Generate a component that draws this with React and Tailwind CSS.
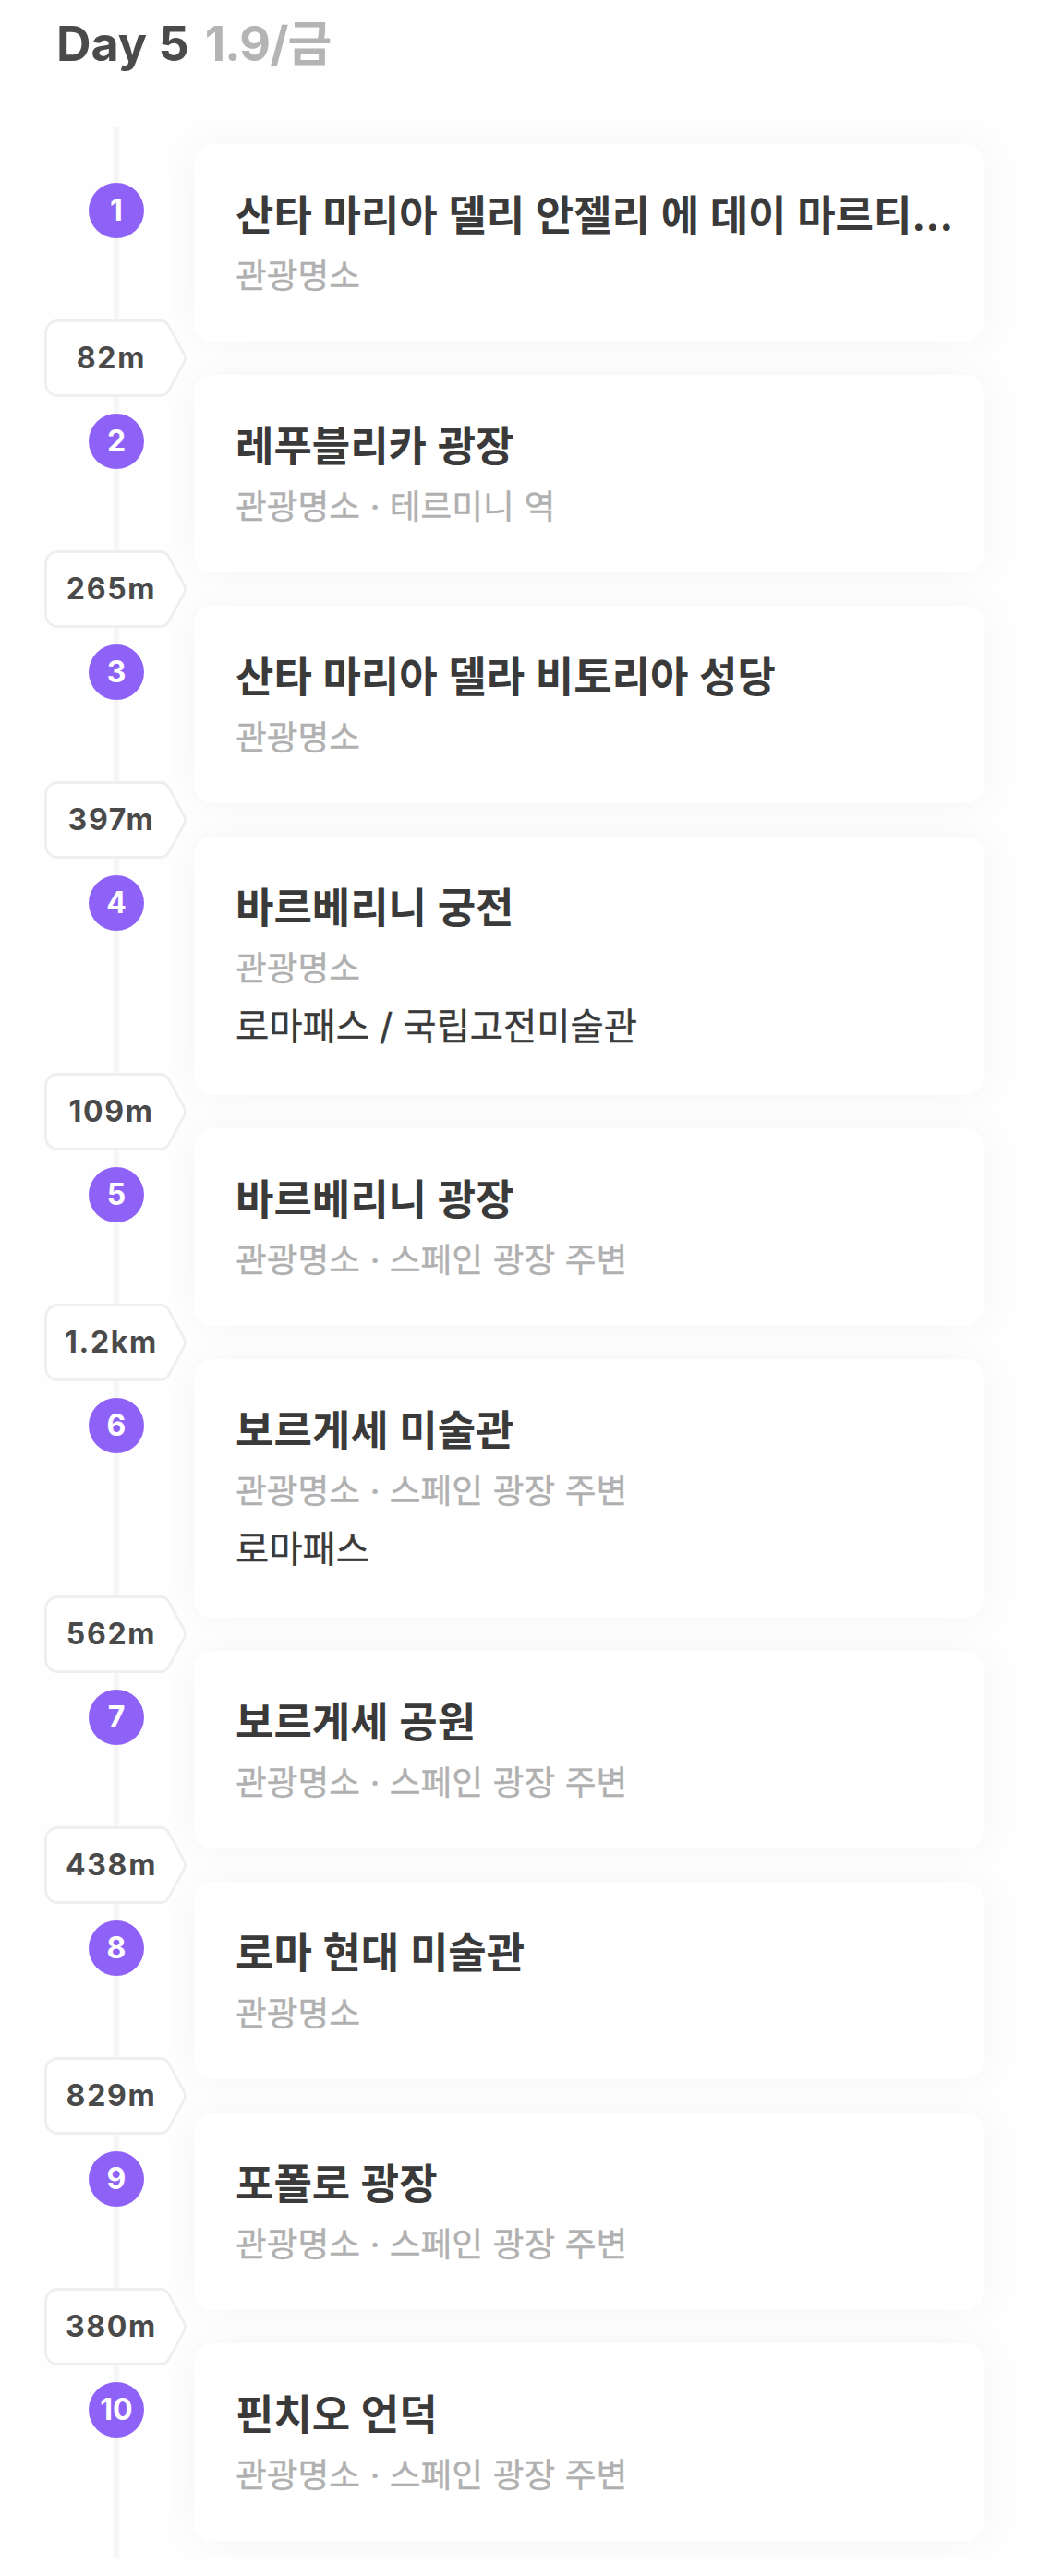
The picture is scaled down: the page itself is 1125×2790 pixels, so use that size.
const places = [
  { name: "산타 마리아 델리 안젤리 에 데이 마르티리 성당", category: "관광명소", distance: "82m" },
  { name: "레푸블리카 광장", category: "관광명소 · 테르미니 역", distance: "265m" },
  { name: "산타 마리아 델라 비토리아 성당", category: "관광명소", distance: "397m" },
  { name: "바르베리니 궁전", category: "관광명소", memo: "로마패스 / 국립고전미술관", distance: "109m" },
  { name: "바르베리니 광장", category: "관광명소 · 스페인 광장 주변", distance: "1.2km" },
  { name: "보르게세 미술관", category: "관광명소 · 스페인 광장 주변", memo: "로마패스", distance: "562m" },
  { name: "보르게세 공원", category: "관광명소 · 스페인 광장 주변", distance: "438m" },
  { name: "로마 현대 미술관", category: "관광명소", distance: "829m" },
  { name: "포폴로 광장", category: "관광명소 · 스페인 광장 주변", distance: "380m" },
  { name: "핀치오 언덕", category: "관광명소 · 스페인 광장 주변" },
];

function DistanceTag({ children }) {
  return (
    <div className="absolute -bottom-[42px] left-12 z-10 flex h-[84px] w-[154px] items-center">
      <svg className="absolute inset-0" width="154" height="84" viewBox="0 0 154 84">
        <path
          d="M14.5 1.5H126Q131.5 1.5 134.5 6.5L151.3 37.5Q153.7 42 151.3 46.5L134.5 77.5Q131.5 82.5 126 82.5H14.5A13 13 0 0 1 1.5 69.5V14.5A13 13 0 0 1 14.5 1.5Z"
          fill="#fff"
          stroke="#efefef"
          strokeWidth="2.8"
        />
      </svg>
      <span className="relative w-[145px] text-center text-[32px] font-bold tracking-[1.7px] text-[#4a4a4a]">
        {children}
      </span>
    </div>
  );
}

function Place({ place, index }) {
  return (
    <li className="relative flex">
      <div className="relative flex w-[186px] shrink-0 justify-center pl-[66px]">
        <div className="h-full w-1.5 bg-[#f6f6f6]" />
        <span className="absolute top-[60px] left-24 flex size-[60px] items-center justify-center rounded-full bg-[#8f62f7] text-[32px] font-bold text-white">
          {index + 1}
        </span>
      </div>
      <div className="min-w-0 flex-1 overflow-hidden py-[18px] pr-[60px] pl-6">
        <div
          className={`rounded-[20px] bg-white pt-[43px] pr-7 pl-[45px] shadow-[0_0_48px_rgba(0,0,0,0.045)] ${
            place.memo ? "h-[280px]" : "h-[214px]"
          }`}
        >
          <h2 className="truncate text-[45px] leading-[70px] font-bold [word-spacing:1px] text-[#3a3a3a]">
            {place.name}
          </h2>
          <p className="mt-1 text-[36.7px] leading-[52px] [word-spacing:0.3px] text-[#b0b0b0] [-webkit-text-stroke:0.4px]">
            {place.category}
          </p>
          {place.memo && (
            <p className="mt-[9px] text-[39.4px] leading-[56px] text-[#3a3a3a] [-webkit-text-stroke:0.4px]">
              {place.memo}
            </p>
          )}
        </div>
      </div>
      {place.distance && <DistanceTag>{place.distance}</DistanceTag>}
    </li>
  );
}

export default function App() {
  return (
    <main className="min-h-[2790px] w-[1125px] bg-[#fefefe] font-['Inter','Noto_Sans_CJK_KR',sans-serif]">
      <h1 className="flex h-[138px] gap-[17px] pt-[14px] pl-[61px] text-[52px] leading-[68px] font-bold text-[#4a4a4a]">
        Day 5 <span className="tracking-[-0.8px] text-[#b4b4b4]">1.9/금</span>
      </h1>
      <ol>
        {places.map((place, i) => (
          <Place key={place.name} place={place} index={i} />
        ))}
      </ol>
    </main>
  );
}
